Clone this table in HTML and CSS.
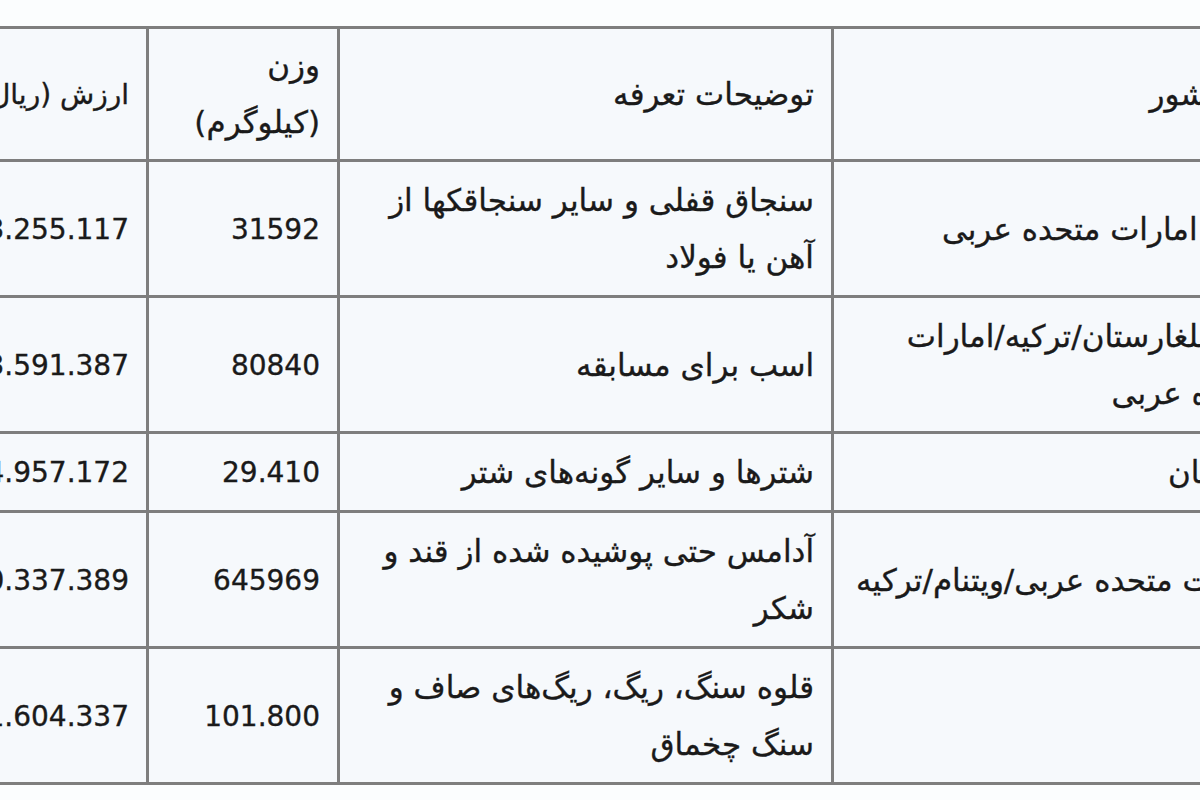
FILE: index.html
```html
<!DOCTYPE html>
<html lang="fa" dir="rtl">
<head>
<meta charset="utf-8">
<title>جدول واردات</title>
<link rel="stylesheet" href="styles.css">
</head>
<body>
<div class="page">
  <table class="data">
    <colgroup>
      <col class="c-country">
      <col class="c-desc">
      <col class="c-weight">
      <col class="c-value">
    </colgroup>
    <thead>
      <tr>
        <th>نام کشور</th>
        <th>توضیحات تعرفه</th>
        <th>وزن<br>(کیلوگرم)</th>
        <th class="num-head">ارزش (ریال)</th>
      </tr>
    </thead>
    <tbody>
      <tr>
        <td>چین/ امارات متحده عربی</td>
        <td>سنجاق قفلی و سایر سنجاقکها از آهن یا فولاد</td>
        <td class="num">31592</td>
        <td class="num">13.255.117</td>
      </tr>
      <tr>
        <td>چین/بلغارستان/ترکیه/امارات متحده عربی</td>
        <td>اسب برای مسابقه</td>
        <td class="num">80840</td>
        <td class="num">13.591.387</td>
      </tr>
      <tr>
        <td>پاکستان</td>
        <td>شترها و سایر گونه‌های شتر</td>
        <td class="num">29.410</td>
        <td class="num">14.957.172</td>
      </tr>
      <tr>
        <td>امارات متحده عربی/ویتنام/ترکیه</td>
        <td>آدامس حتی پوشیده شده از قند و شکر</td>
        <td class="num">645969</td>
        <td class="num">10.337.389</td>
      </tr>
      <tr>
        <td></td>
        <td>قلوه سنگ، ریگ، ریگ‌های صاف و سنگ چخماق</td>
        <td class="num">101.800</td>
        <td class="num">11.604.337</td>
      </tr>
    </tbody>
  </table>
</div>
</body>
</html>
```

FILE: styles.css
```css
html, body {
  margin: 0;
  padding: 0;
}
body {
  width: 1200px;
  height: 800px;
  overflow: hidden;
  background: #fbfdfe;
  font-family: "DejaVu Sans", "Liberation Sans", sans-serif;
  color: #1a1a1a;
}
.page {
  direction: ltr;
  padding-top: 26px;
}
.data {
  direction: rtl;
  margin-left: -54px;
  width: 1341px;
  table-layout: fixed;
  border-collapse: collapse;
  background: #f6f9fc;
  border: 3px solid #7e7e7e;
  font-size: 31px;
  line-height: 57px;
}
.c-value { width: 200px; }
.c-weight { width: 191px; }
.c-desc { width: 494px; }
.c-country { width: 456px; }
.data th,
.data td {
  border: 3px solid #7e7e7e;
  padding: 10px 17px 9px;
  text-align: right;
  vertical-align: middle;
  font-weight: normal;
  -webkit-text-stroke: 0.35px #1a1a1a;
}
.data th {
  padding-top: 8px;
  padding-bottom: 8px;
}
.data th.num-head {
  font-size: 28px;
  white-space: nowrap;
  overflow: hidden;
}
.data td.num {
  direction: ltr;
  text-align: right;
  white-space: nowrap;
  overflow: hidden;
  font-size: 28px;
}
```
